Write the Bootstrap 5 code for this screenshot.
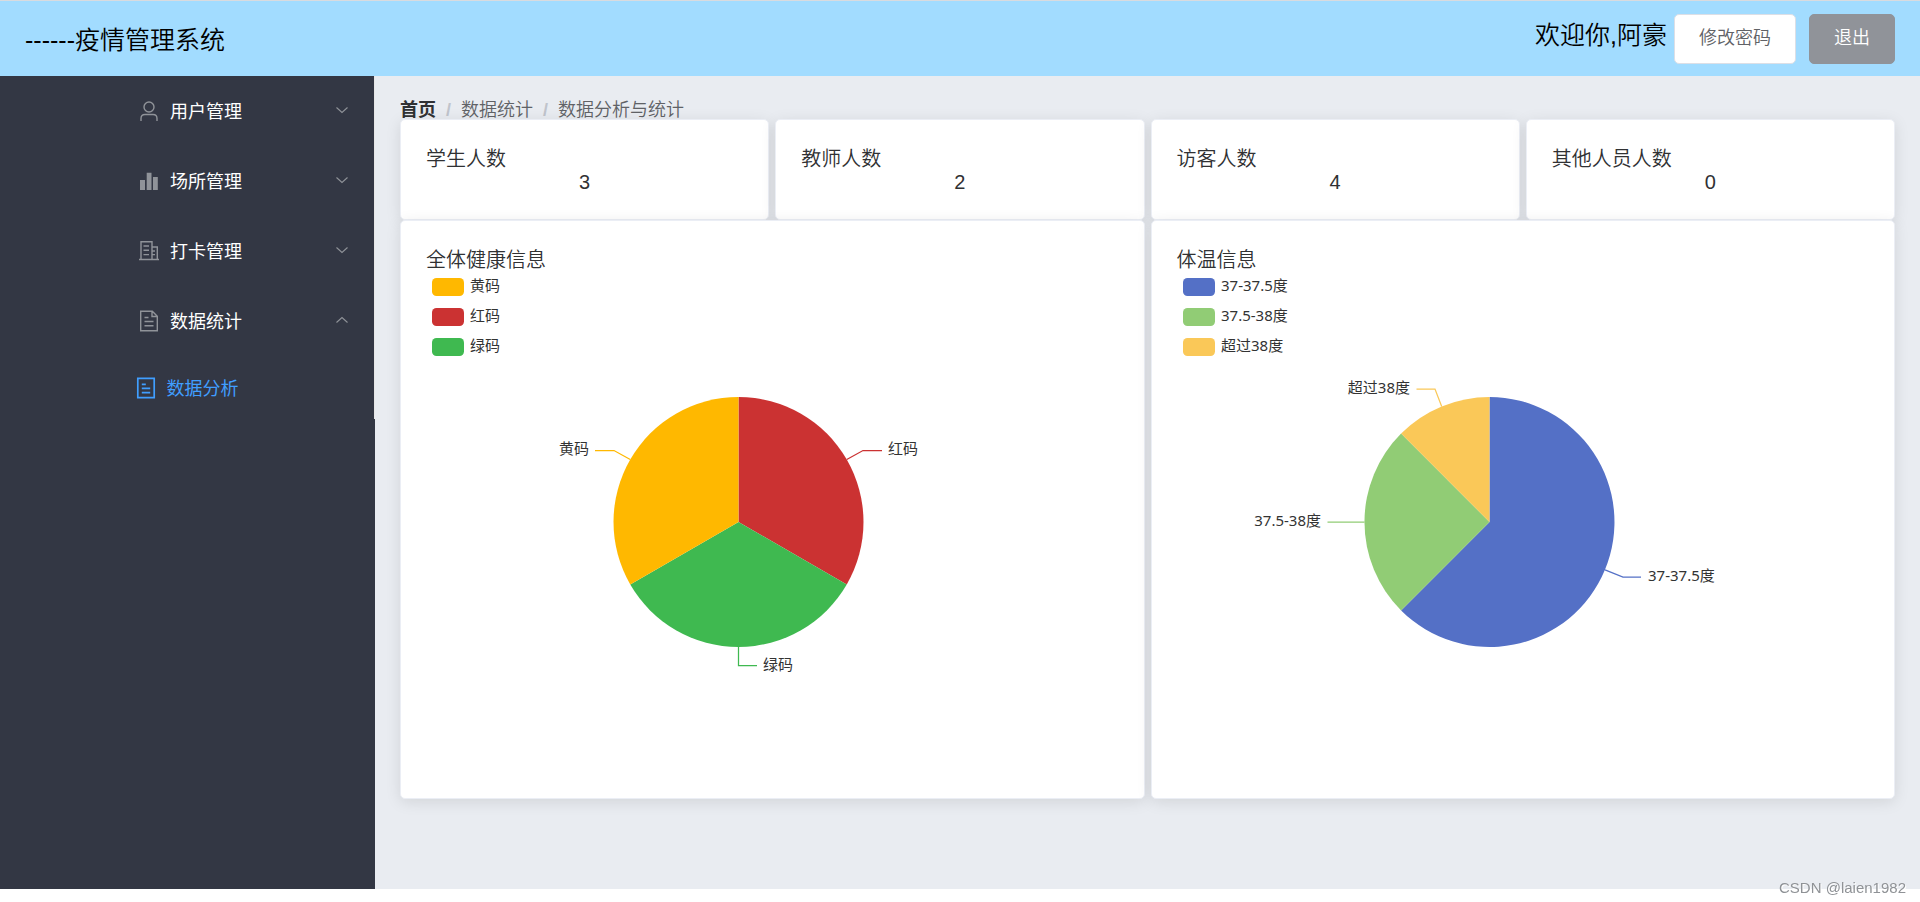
<!DOCTYPE html>
<html lang="zh-CN">
<head>
<meta charset="utf-8">
<meta name="viewport" content="width=device-width, initial-scale=1">
<title>疫情管理系统</title>
<link href="https://cdn.jsdelivr.net/npm/bootstrap@5.3.0/dist/css/bootstrap.min.css" rel="stylesheet">
<style>
  body { font-family: "Liberation Sans", "Noto Sans CJK SC", sans-serif; font-size: 18px; line-height: 26px; color: #303133; padding-bottom: 13px; }
  a { text-decoration: none; }
  .topbar { height: 76px; padding: 0 25px; background: #a2dcff; border-top: 1px solid #d9dbdf; color: #000; font-size: 25px; font-weight: 350; }
  .brand-name { padding-top: 2px; }
  .greeting { margin: 0 7px 7px 0; }
  .topbar .btn { height: 50px; padding: 0 24px 1px; border-radius: 5px; font-size: 18px; font-weight: 350; }
  .btn-plain { background: #fff; border-color: #dcdfe6; color: #606266; margin-right: 13px; }
  .btn-info-grey { background: #909399; border-color: #909399; color: #fff; }
  .sidebar { width: 375px; background: #333744; }
  .side-menu { border-right: 1px solid #e6e6e6; }
  .side-menu > li > a { position: relative; height: 70px; padding-left: 2px; color: #fff; }
  .side-menu span { padding-top: 2px; }
  .side-menu .sub-link { height: 63px; padding-right: 5px; color: #409eff; }
  .menu-icon { width: 30px; height: 22px; margin-right: 6px; fill: none; stroke: #909399; stroke-width: 1.4; }
  .sub-link .menu-icon { stroke: #409eff; stroke-width: 1.7; }
  .chevron { position: absolute; right: 25px; top: 27px; width: 14px; height: 14px; fill: none; stroke: #909399; stroke-width: 1.1; }
  .content-area { background: #e9ecf1; padding: 25px; min-width: 0; }
  .breadcrumb { line-height: 18px; font-weight: 350; --bs-breadcrumb-item-padding-x: 10px; --bs-breadcrumb-divider-color: #c0c4cc; }
  .breadcrumb-item + .breadcrumb-item::before { font-weight: 700; }
  .breadcrumb a { color: #303133; font-weight: 700; }
  .breadcrumb span { color: #606266; }
  .tight-row { --bs-gutter-x: 6px; }
  .panel { padding: 25px; border: 1px solid #ebeef5; border-radius: 5px; box-shadow: 0 3px 15px rgba(0,0,0,.1); color: #303133; font-size: 20px; }
  .panel h2 { font-size: 20px; font-weight: 350; line-height: 23px; margin: 0; padding-top: 3px; color: #303133; }
  .panel p { line-height: 23px; margin: 0; }
  .pie { display: block; width: 625px; max-width: 100%; margin-bottom: 1px; font-family: "Noto Sans", "Noto Sans CJK SC", sans-serif; font-size: 15px; fill: #333; }
  .pie polyline { fill: none; stroke-width: 1.25; }
  .credit { position: fixed; right: 14px; bottom: 2px; font-size: 15px; line-height: 24px; color: #8f9296; text-shadow: 1px 1px 0 #fff; }
</style>
</head>
<body class="min-vh-100 d-flex flex-column">
<header class="topbar d-flex align-items-center justify-content-between">
  <div class="brand-name">------疫情管理系统</div>
  <div class="d-flex align-items-center">
    <span class="greeting">欢迎你,阿豪</span>
    <button type="button" class="btn btn-plain">修改密码</button>
    <button type="button" class="btn btn-info-grey">退出</button>
  </div>
</header>
<div class="d-flex flex-grow-1">
  <nav class="sidebar flex-shrink-0" aria-label="主菜单">
    <ul class="side-menu list-unstyled mb-0">
      <li><a href="#" class="d-flex align-items-center justify-content-center">
        <svg class="menu-icon" viewBox="0 0 22 22"><circle cx="11" cy="7" r="5"/><path d="M3 21v-2.500q0-4 4-4h8q4 0 4 4V21"/></svg><span>用户管理</span>
        <svg class="chevron" viewBox="0 0 14 14"><path d="M1.500 4.500 7 9.500l5.500-5"/></svg></a></li>
      <li><a href="#" class="d-flex align-items-center justify-content-center">
        <svg class="menu-icon" viewBox="0 0 22 22"><path fill="#909399" stroke="none" d="M2 10h5v10H2zM8.700 2.700h4.800V20H8.700zM15 7h4.800v13H15z"/></svg><span>场所管理</span>
        <svg class="chevron" viewBox="0 0 14 14"><path d="M1.500 4.500 7 9.500l5.500-5"/></svg></a></li>
      <li><a href="#" class="d-flex align-items-center justify-content-center">
        <svg class="menu-icon" viewBox="0 0 22 22"><path d="M1 19.500h20M3 19.500V1.700h11v17.800M14 7h5.300v12.500M5.500 6H11M5.500 10.300H11M5.500 14.600H11M14 11h3M14 14.600h3"/></svg><span>打卡管理</span>
        <svg class="chevron" viewBox="0 0 14 14"><path d="M1.500 4.500 7 9.500l5.500-5"/></svg></a></li>
      <li><a href="#" class="d-flex align-items-center justify-content-center" aria-expanded="true">
        <svg class="menu-icon" viewBox="0 0 22 22"><path d="M2.700 1.300h11.600l5 5v14.400H2.700zM14 1.300v5.200h5.300M6.500 7.500h4M6.500 11.500h9M6.500 15.800h9"/></svg><span>数据统计</span>
        <svg class="chevron" viewBox="0 0 14 14"><path d="M1.500 9.500 7 4.500l5.500 5"/></svg></a>
        <ul class="list-unstyled">
          <li><a href="#" class="sub-link d-flex align-items-center justify-content-center">
            <svg class="menu-icon" viewBox="0 0 22 22"><path d="M2.800 1.300h16.400v19.400H2.800zM6.800 7.300h4M6.800 11.400h8.400M6.800 15.600h8.400"/></svg><span>数据分析</span></a></li>
        </ul>
      </li>
    </ul>
  </nav>
  <main class="content-area flex-grow-1">
    <nav aria-label="breadcrumb">
      <ol class="breadcrumb mb-0">
        <li class="breadcrumb-item"><a href="#">首页</a></li>
        <li class="breadcrumb-item"><span>数据统计</span></li>
        <li class="breadcrumb-item"><span>数据分析与统计</span></li>
      </ol>
    </nav>
    <div class="row tight-row">
      <div class="col-3"><section class="card panel"><h2>学生人数</h2><p class="text-center">3</p></section></div>
      <div class="col-3"><section class="card panel"><h2>教师人数</h2><p class="text-center">2</p></section></div>
      <div class="col-3"><section class="card panel"><h2>访客人数</h2><p class="text-center">4</p></section></div>
      <div class="col-3"><section class="card panel"><h2>其他人员人数</h2><p class="text-center">0</p></section></div>
    </div>
    <div class="row tight-row">
      <div class="col-6"><section class="card panel"><h2>全体健康信息</h2>
        <svg class="pie" viewBox="0 0 625 500" role="img" aria-label="全体健康信息">
          <rect x="6" y="6" width="32" height="18" rx="4.500" fill="#ffb800"/><text x="44" y="19">黄码</text>
          <rect x="6" y="36" width="32" height="18" rx="4.500" fill="#cb3232"/><text x="44" y="49">红码</text>
          <rect x="6" y="66" width="32" height="18" rx="4.500" fill="#3fb950"/><text x="44" y="79">绿码</text>
          <path fill="#cb3232" d="M312.500 250V125A125 125 0 0 1 420.750 312.500Z"/>
          <path fill="#3fb950" d="M312.500 250 420.750 312.500A125 125 0 0 1 204.250 312.500Z"/>
          <path fill="#ffb800" d="M312.500 250 204.250 312.500A125 125 0 0 1 312.500 125Z"/>
          <polyline stroke="#cb3232" points="420.750,187.500 437,178.500 456,178.500"/><text x="462" y="182">红码</text>
          <polyline stroke="#3fb950" points="312.500,375 312.500,393.500 331,393.500"/><text x="337" y="398">绿码</text>
          <polyline stroke="#ffb800" points="204.250,187.500 188,178.500 169,178.500"/><text x="163" y="182" text-anchor="end">黄码</text>
        </svg></section></div>
      <div class="col-6"><section class="card panel"><h2>体温信息</h2>
        <svg class="pie" viewBox="0 0 625 500" role="img" aria-label="体温信息">
          <rect x="6" y="6" width="32" height="18" rx="4.500" fill="#5470c6"/><text x="44" y="19">37-37.5度</text>
          <rect x="6" y="36" width="32" height="18" rx="4.500" fill="#91cc75"/><text x="44" y="49">37.5-38度</text>
          <rect x="6" y="66" width="32" height="18" rx="4.500" fill="#fac858"/><text x="44" y="79">超过38度</text>
          <path fill="#5470c6" d="M312.500 250V125A125 125 0 1 1 224.100 338.400Z"/>
          <path fill="#91cc75" d="M312.500 250 224.100 338.400A125 125 0 0 1 224.100 161.600Z"/>
          <path fill="#fac858" d="M312.500 250 224.100 161.600A125 125 0 0 1 312.500 125Z"/>
          <polyline stroke="#5470c6" points="428,297.800 446,305 464,305"/><text x="471" y="309">37-37.5度</text>
          <polyline stroke="#91cc75" points="187.500,250 150.500,250"/><text x="144" y="254" text-anchor="end">37.5-38度</text>
          <polyline stroke="#fac858" points="264.700,134.500 258,117 239.500,117"/><text x="233" y="121" text-anchor="end">超过38度</text>
        </svg></section></div>
    </div>
  </main>
</div>
<div class="credit">CSDN @laien1982</div>
<script src="https://cdn.jsdelivr.net/npm/bootstrap@5.3.0/dist/js/bootstrap.bundle.min.js"></script>
</body>
</html>
